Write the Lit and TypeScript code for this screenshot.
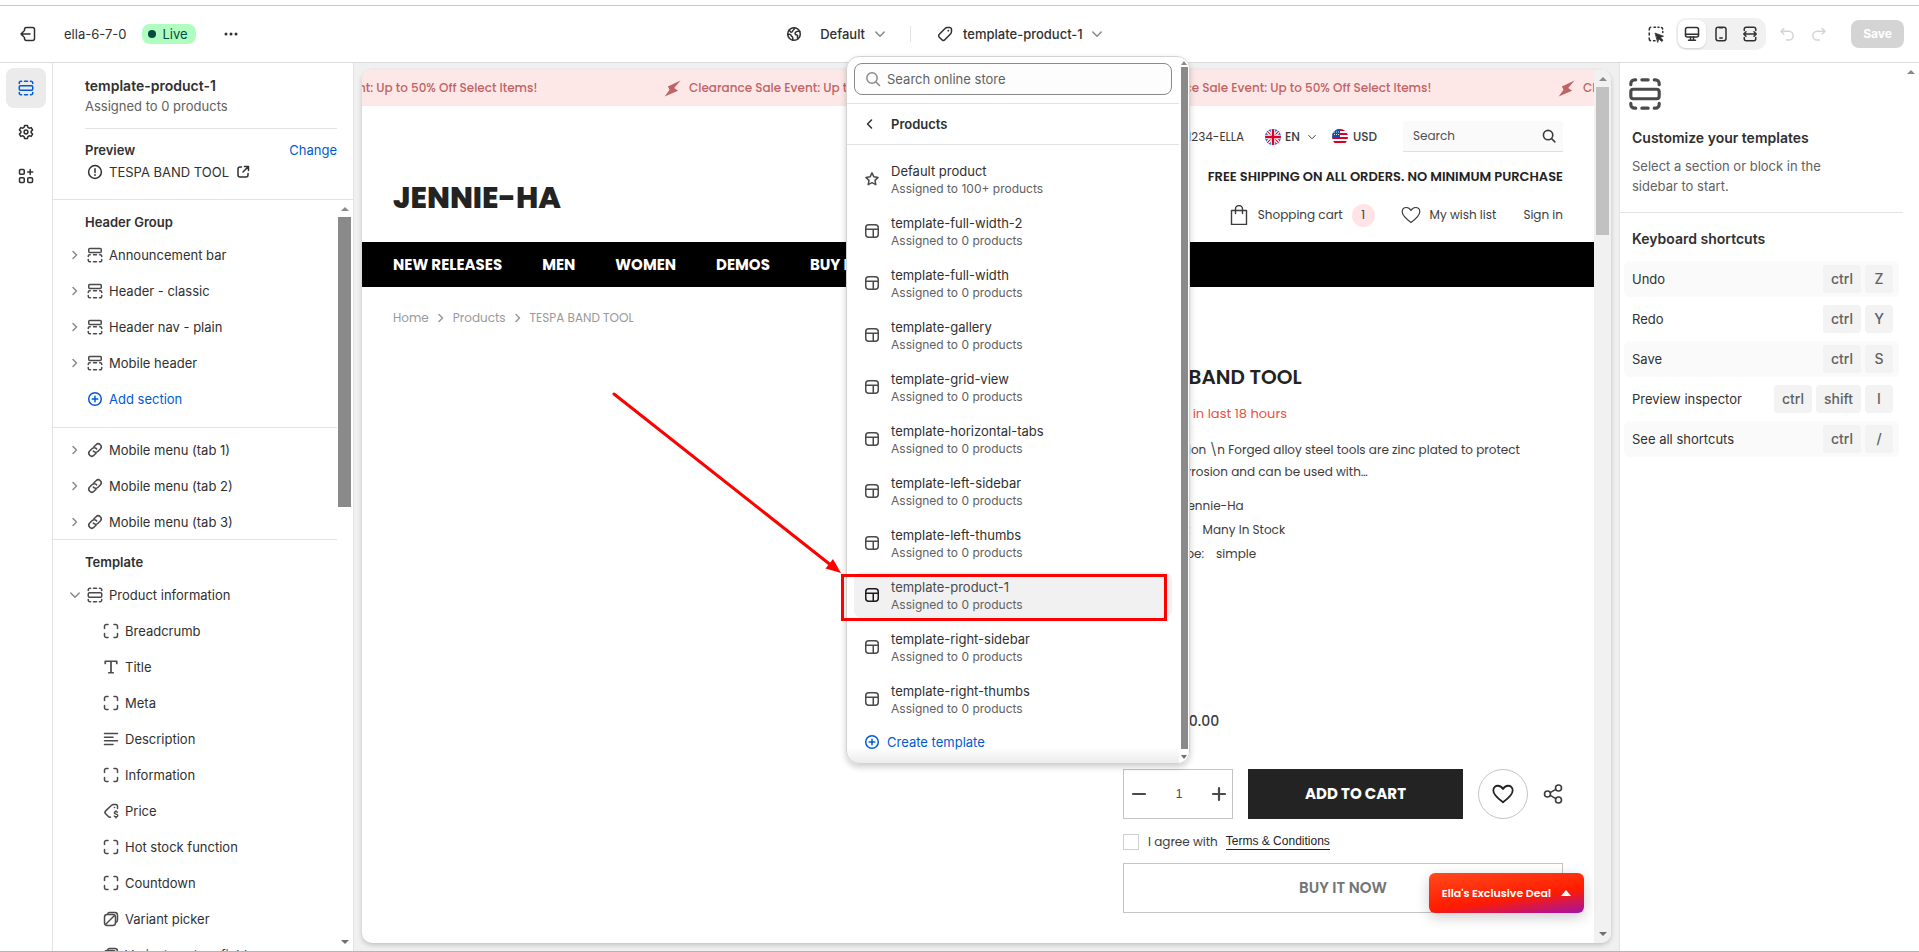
import { LitElement, html, css, svg, type TemplateResult } from "lit";
import { customElement, state } from "lit/decorators.js";
import { classMap } from "lit/directives/class-map.js";

/* ---------- icon set, drawn on a 20 unit grid ---------- */
const ICONS: Record<string, TemplateResult> = {
  exit: svg`<path d="M6.5 6.5V5.5a2 2 0 0 1 2-2h6a2 2 0 0 1 2 2v9a2 2 0 0 1-2 2h-6a2 2 0 0 1-2-2v-1M12 10H3M5.75 7.25 3 10l2.75 2.75"/>`,
  dots: svg`<g fill="currentColor" stroke="none"><circle cx="5" cy="10" r="1.5"/><circle cx="10" cy="10" r="1.5"/><circle cx="15" cy="10" r="1.5"/></g>`,
  globe: svg`<circle cx="10" cy="10" r="6.3"/><path d="M5 6.2c1.3.6 1.2 2 2.4 2.1 1.400 0 .8-1.500 2-2.200 1-.6 1-1.600.7-2.300M3.800 10.500c1.800-.4 3.200.1 3.500 1.200.3 1 1.500 1 1.500 2.200v2.300M15.800 7.500c-1.500-.5-3.600-.2-4.400 1-.9 1.400.2 2.400 1.400 2.500 1.200.2.8 1.300.6 2.200-.1.8.3 1.200.8 1.300"/>`,
  chevDown: svg`<path d="m5.800 8 4.200 4.300L14.200 8"/>`,
  chevRight: svg`<path d="m8 6.500 3.500 3.500L8 13.500"/>`,
  chevLeft: svg`<path d="M11.500 6 7.500 10l4 4"/>`,
  tag: svg`<path d="M10.300 4.300c.6-.6 1.300-.8 2.100-.8h2.100a2 2 0 0 1 2 2v2.100c0 .8-.3 1.500-.8 2.100l-5.900 6.100a2 2 0 0 1-2.900 0l-2.600-2.600a2 2 0 0 1 0-2.900z"/><circle cx="13.300" cy="6.700" r=".9" fill="currentColor" stroke="none"/>`,
  inspector: svg`<path d="M3.250 6v-.75a2 2 0 0 1 1.500-2M8 3.250h1.500M12 3.250h1M15.500 3.500a2 2 0 0 1 1.200 1.500M16.750 7.500v1M3.250 9v2M3.250 14v.75a2 2 0 0 0 1.250 2M7.500 16.750h1.500"/><path d="m9.300 9.200 8.200 3-3.200 1.200 2.700 2.900-1.300 1.300-2.800-2.800-1.100 3.300z" fill="currentColor" stroke-width=".8"/>`,
  desktop: svg`<rect x="3.500" y="3.500" width="13" height="9.500" rx="2"/><path d="M3.500 10.200h13M8.500 13v3M11.500 13v3M6.500 16.300h7"/>`,
  phone: svg`<rect x="5" y="3.250" width="10" height="13.500" rx="2.200"/><path d="M8.800 14h2.400M8.500 3.700h3"/>`,
  expand: svg`<path d="M4.250 6.500V5.250a2 2 0 0 1 2-2h7.500a2 2 0 0 1 2 2V6.500M4.250 13.500v1.250a2 2 0 0 0 2 2h7.500a2 2 0 0 0 2-2V13.500M4 10h12M6 7.800 3.750 10 6 12.200M14 7.800 16.250 10 14 12.200"/>`,
  undo: svg`<path d="M6.800 4.500 4 7.250 6.800 10M4.250 7.250h7.500a4.300 4.300 0 0 1 0 8.750H9.500"/>`,
  redo: svg`<path d="M13.200 4.500 16 7.250 13.200 10M15.750 7.250h-7.500a4.300 4.300 0 0 0 0 8.750h2.250"/>`,
  section: svg`<rect x="3.250" y="7.750" width="13.500" height="4.500" rx="1.200"/><path d="M3.250 5.600v-.6A1.750 1.750 0 0 1 5 3.250h.6M8.500 3.250h3M14.400 3.250h.6A1.750 1.750 0 0 1 16.750 5v.6M3.250 14.400v.6A1.750 1.750 0 0 0 5 16.750h.6M8.500 16.750h3M14.400 16.750h.6A1.750 1.750 0 0 0 16.750 15v-.6"/>`,
  header: svg`<rect x="3.750" y="3.500" width="12.500" height="4" rx="1"/><path d="M3.250 11.600V11a1.400 1.400 0 0 1 1.400-1.250h.6M8.500 9.750h3M14.700 9.750h.6A1.400 1.400 0 0 1 16.750 11v.6M3.250 14.400v.9a1.500 1.500 0 0 0 1.500 1.450h.7M8.500 16.750h3M14.500 16.750h.7a1.500 1.500 0 0 0 1.550-1.450v-.9"/>`,
  gear: svg`<path d="M8.600 3.400h2.800l.5 2 1.300.8 2-.6 1.400 2.400-1.500 1.400v1.200l1.500 1.400-1.400 2.400-2-.6-1.300.8-.5 2H8.600l-.5-2-1.300-.8-2 .6-1.400-2.400 1.500-1.400V9.400L3.400 8l1.400-2.400 2 .6 1.300-.8z"/><circle cx="10" cy="10" r="1.900"/>`,
  apps: svg`<rect x="3.500" y="3.500" width="4.750" height="4.750" rx="1"/><rect x="3.500" y="11.750" width="4.750" height="4.750" rx="1"/><rect x="11.750" y="11.750" width="4.750" height="4.750" rx="1"/><path d="M14.200 3.500v5M11.700 6h5"/>`,
  alert: svg`<circle cx="10" cy="10" r="6.400"/><path d="M10 6.800v3.700"/><circle cx="10" cy="13" r=".9" fill="currentColor" stroke="none"/>`,
  external: svg`<path d="M8.500 5H7A2 2 0 0 0 5 7v6a2 2 0 0 0 2 2h6a2 2 0 0 0 2-2v-1.500M11.500 4.500h4v4M15.200 4.800 10 10"/>`,
  plus: svg`<circle cx="10" cy="10" r="6.300"/><path d="M10 7.200v5.600M7.200 10h5.600"/>`,
  link: svg`<g transform="rotate(-45 10 10)"><path d="M8.500 13H5.500a3 3 0 0 1 0-6h3.500a3 3 0 0 1 2.900 3.500M11.500 7h3a3 3 0 0 1 0 6H11a3 3 0 0 1-2.900-3.500"/></g>`,
  block: svg`<path d="M3.500 7.500V5.250A1.750 1.750 0 0 1 5.250 3.500H7M13 3.500h1.750a1.750 1.750 0 0 1 1.750 1.750V7.500M3.500 12.500v2.250A1.750 1.750 0 0 0 5.250 16.500H7M13 16.500h1.750a1.750 1.750 0 0 0 1.750-1.750V12.500"/>`,
  title: svg`<path d="M4.250 6.500V4.250h11.500V6.500M10 4.250v11.500M7.800 15.750h4.400" stroke-width="1.700"/>`,
  text: svg`<path d="M3.500 4.500h13M3.500 8.200h8.500M3.500 11.800h13M3.500 15.500h8.500"/>`,
  price: svg`<path d="M16.500 7.500V5.300a1.800 1.800 0 0 0-1.800-1.800h-2.100c-.8 0-1.500.3-2 .8l-6 5.600a2 2 0 0 0 0 2.800l2.800 2.900c.7.700 1.500.8 2.100.5"/><circle cx="13.500" cy="6.500" r=".8" fill="currentColor" stroke="none"/><path d="M16.500 11.200c-.4-.7-3.200-1-3.200.6 0 1.700 3.500.8 3.500 2.700 0 1.700-3 1.600-3.600.5M15 9.800v1M15 16v1" stroke-width="1.400"/>`,
  variant: svg`<path d="M6.500 5.200a2.200 2.200 0 0 1 1.800-1.700h5.500a2.700 2.700 0 0 1 2.700 2.700v4.800a2.200 2.200 0 0 1-1.700 2.200"/><rect x="3.500" y="5.500" width="11" height="11" rx="2.700"/><path d="m5 15 8-8"/>`,
  layout: svg`<rect x="3.750" y="3.750" width="12.500" height="12.500" rx="3"/><path d="M4 8.250h12M11.250 8.250v8"/>`,
  star: svg`<path d="m10 3.900 1.900 3.900 4.200.6-3.100 3 .8 4.300-3.800-2-3.800 2 .8-4.300-3.100-3 4.200-.6z"/>`,
  search: svg`<circle cx="9" cy="9" r="5.200"/><path d="m13 13 3.500 3.500"/>`,
  bolt: svg`<path d="M19.500 .5 4.500 7.500 6.500 11.500 .8 19.500 16.500 12.500 12 9.500z" fill="currentColor" stroke="none"/>`,
  flame: svg`<path d="M10 2c1 3 5 5 5 10a5 5 0 0 1-10 0c0-2 1-3 2-4 .3 1.500 1 2 1.500 2C9 7 8.500 5 10 2z" fill="currentColor" stroke="none"/>`,
  bag: svg`<path d="M2.500 5.500h15v14h-15zM6.500 8.500V4a3.500 3.500 0 0 1 7 0v4.500"/>`,
  heart: svg`<path d="M10 17.500C6 14.500 1.200 11 1.200 6.800 1.200 4 3.200 2.500 5.400 2.500 7.500 2.500 9 3.800 10 5.500c1-1.700 2.500-3 4.600-3 2.200 0 4.200 1.500 4.200 4.300 0 4.200-4.800 7.700-8.800 10.700z"/>`,
  share: svg`<circle cx="4.500" cy="10" r="3"/><circle cx="15.500" cy="4" r="3"/><circle cx="15.500" cy="16" r="3"/><path d="M7.200 8.600 12.800 5.400M7.200 11.400l5.600 3.200"/>`,
  minus: svg`<path d="M4 10h12"/>`,
  cross: svg`<path d="M4 10h12M10 4v12"/>`,
};

const icon = (name: string, size = 20, stroke = 1.5) => html`<svg
  class="icon" width=${size} height=${size} viewBox="0 0 20 20" fill="none" stroke="currentColor"
  stroke-width=${stroke} stroke-linecap="round" stroke-linejoin="round" aria-hidden="true">${ICONS[name]}</svg>`;

const ukFlag = html`<svg width="16" height="16" viewBox="0 0 16 16" aria-hidden="true">
  <defs><clipPath id="uk"><circle cx="8" cy="8" r="8" /></clipPath></defs>
  <g clip-path="url(#uk)"><rect width="16" height="16" fill="#0b50b3" />
    <path d="M0 0l16 16M16 0 0 16" stroke="#fff" stroke-width="3.600" /><path d="M0 0l16 16M16 0 0 16" stroke="#d80027" stroke-width="1.200" />
    <path d="M8 0v16M0 8h16" stroke="#fff" stroke-width="4.600" /><path d="M8 0v16M0 8h16" stroke="#d80027" stroke-width="2.400" /></g></svg>`;
const usFlag = html`<svg width="16" height="16" viewBox="0 0 16 16" aria-hidden="true">
  <defs><clipPath id="us"><circle cx="8" cy="8" r="8" /></clipPath></defs>
  <g clip-path="url(#us)"><rect width="16" height="16" fill="#fff" />
    <path d="M0 1h16M0 5h16M0 9h16M0 13h16" stroke="#d80027" stroke-width="2" />
    <rect width="8" height="8" fill="#0b50b3" /><path d="M2 3h5M2 5.500h5" stroke="#fff" stroke-width=".8" stroke-dasharray="1 1" /></g></svg>`;

const HEADER_ROWS = ["Announcement bar", "Header - classic", "Header nav - plain", "Mobile header"];
const MENU_ROWS = ["Mobile menu (tab 1)", "Mobile menu (tab 2)", "Mobile menu (tab 3)"];
const BLOCKS: [string, string][] = [
  ["block", "Breadcrumb"], ["title", "Title"], ["block", "Meta"], ["text", "Description"],
  ["block", "Information"], ["price", "Price"], ["block", "Hot stock function"],
  ["block", "Countdown"], ["variant", "Variant picker"], ["variant", "Variant custom field"],
];
const TEMPLATES = [
  "Default product", "template-full-width-2", "template-full-width", "template-gallery",
  "template-grid-view", "template-horizontal-tabs", "template-left-sidebar", "template-left-thumbs",
  "template-product-1", "template-right-sidebar", "template-right-thumbs",
];
const SHORTCUTS: [string, string[]][] = [
  ["Undo", ["ctrl", "Z"]], ["Redo", ["ctrl", "Y"]], ["Save", ["ctrl", "S"]],
  ["Preview inspector", ["ctrl", "shift", "I"]], ["See all shortcuts", ["ctrl", "/"]],
];

@customElement("app-root")
export class AppRoot extends LitElement {
  @state() private selected = "template-product-1";

  static styles = css`
    :host {
      display: grid;
      grid-template-rows: auto minmax(0, 1fr);
      height: 100vh;
      box-sizing: border-box;
      border-bottom: 1px solid #b9b2b6;
      padding-top: 5px;
      overflow: hidden;
      position: relative;
      background: #fff;
      color: #303030;
      font: 400 13px/20px Inter, sans-serif;
    }
    *, *::before, *::after { box-sizing: border-box; }
    button, input { font: inherit; color: inherit; margin: 0; }
    button { background: none; border: 0; padding: 0; text-align: left; display: flex; align-items: center; cursor: pointer; }
    a { color: inherit; text-decoration: none; }
    h1, h2, h3, p, ul { margin: 0; padding: 0; list-style: none; font-size: inherit; }
    .icon { display: block; flex: none; }
    .strong { font-weight: 600; }
    .blue { color: #005bd3; }
    .muted { color: #616161; }

    /* top bar */
    .topbar {
      display: grid; grid-template-columns: 1fr auto 1fr; align-items: center;
      height: 58px; border-top: 1px solid #c9c9c9; border-bottom: 1px solid #dcdcdc;
      padding: 0 15px 0 18px; position: relative; z-index: 2;
    }
    .tb-left, .tb-mid, .tb-right { display: flex; align-items: center; }
    .theme-name { margin-left: 26px; }
    .badge { display: flex; align-items: center; gap: 6px; height: 20px; padding: 0 8px 0 6px; margin: 0 25px 0 16px; border-radius: 8px; background: #affebf; color: #014b40; }
    .dot { width: 8px; height: 8px; border-radius: 50%; background: #014b40; }
    .tb-mid { font-weight: 500; padding-right: 31px; }
    .label { margin: 0 5px 0 16px; }
    .picker .label { margin: 0 4px 0 8px; }
    .label + .icon { color: #8a8a8a; }
    .sep { width: 1px; height: 16px; margin: 0 18px 0 20px; background: #e3e3e3; }
    .picker { position: relative; padding-left: 6px; }
    .tb-right { justify-content: flex-end; }
    .devices { display: flex; gap: 1px; padding: 2px; margin: 0 11px 0 10px; border-radius: 10px; background: #f1f1f1; }
    .devices button { width: 28px; height: 28px; justify-content: center; border-radius: 8px; }
    .devices .on { background: #fff; box-shadow: 0 1px 2px #0002; }
    .history { display: flex; gap: 12px; color: #d4d4d4; margin-right: 22px; }
    .save { height: 28px; padding: 0 12px; border-radius: 8px; background: #d4d4d4; color: #fff; font-weight: 700; font-size: 12px; }

    /* body */
    .body { display: grid; grid-template-columns: 53px 301px minmax(0, 1fr) 300px; min-height: 0; }
    .rail { display: flex; flex-direction: column; gap: 4px; padding: 5px 6px; border-right: 1px solid #e3e3e3; }
    .rail button { height: 40px; justify-content: center; border-radius: 8px; }
    .rail .on { background: #ebebeb; color: #005bd3; }

    .panel { display: flex; flex-direction: column; min-height: 0; border-right: 1px solid #e3e3e3; }
    .p-head { padding: 13px 16px 17px 32px; border-bottom: 1px solid #e3e3e3; }
    .p-title { font-size: 14px; }
    .preview { border-top: 1px solid #e3e3e3; margin-top: 12px; padding-top: 11px; display: grid; gap: 2px; }
    .line { display: flex; justify-content: space-between; }
    .res { display: flex; align-items: center; gap: 4px; }
    .tree { display: grid; grid-template-columns: minmax(0, 1fr) 16px; flex: 1; min-height: 0; overflow: hidden; }
    .sections { min-width: 0; min-height: 0; overflow: hidden; }
    .group { border-bottom: 1px solid #e3e3e3; padding-bottom: 10px; }
    .group.tabs { padding: 4px 0 0; }
    .group.tabs .row:last-child { height: 35px; }
    .g-title { padding: 12px 32px 5px; }
    .group.last { border: 0; }
    .row { height: 36px; width: 100%; padding-left: 12px; }
    .row .chev { color: #8a8a8a; }
    .row > .icon { color: #4a4a4a; }
    .row .name { margin-left: 4px; }
    .row.child { padding-left: 48px; }
    .row.add { padding-left: 32px; }
    .row.add > .icon { color: #005bd3; }
    .bar { display: flex; flex-direction: column; align-items: center; min-height: 0; padding-top: 7px; }
    .tree .bar { padding-right: 1px; }
    .up, .down { flex: none; border: 4px solid transparent; width: 0; height: 0; }
    .up { border-top: 0; border-bottom-color: #8a8a8a; }
    .down { border-bottom: 0; border-top-color: #6f6f6f; margin-top: auto; margin-bottom: 7px; }
    .thumb { flex: none; background: #8a8a8a; width: 13px; }
    .tree .thumb { height: 290px; margin: 6px 0; }

    /* preview canvas */
    .canvas { background: #f0f0f0; padding: 7px 8px; min-width: 0; min-height: 0; }
    .frame { height: calc(100% - 1px); display: grid; grid-template-columns: minmax(0, 1fr) 17px; background: #fff; border-radius: 10px; overflow: hidden; box-shadow: 0 2px 5px #0003; position: relative; }
    .frame .bar { background: #f1f1f1; }
    .frame .thumb { background: #c1c1c1; height: 148px; margin-top: 6px; }
    .store { min-width: 0; overflow: hidden; color: #3c3c3c; font-family: Poppins, Inter, sans-serif; font-size: 12px; line-height: 22px; }
    .ticker { height: 36px; overflow: hidden; background: #fee8e7; color: #bf6466; }
    .track { display: flex; margin-left: -145px; height: 100%; }
    .promo { flex: none; width: 447px; display: flex; align-items: center; gap: 8px; font-weight: 500; white-space: nowrap; }
    .s-head { display: flex; justify-content: space-between; padding: 15px 31px 15px; }
    .logo { font-size: 30px; line-height: 36px; font-weight: 800; color: #232323; padding-top: 59px; }
    .s-tools { display: flex; flex-direction: column; align-items: flex-end; }
    .s-line { display: flex; align-items: center; }
    .lang { font-weight: 500; gap: 5px; }
    .lang.en { gap: 4px; margin: 0 12px 0 21px; }
    .s-search { display: flex; align-items: center; width: 160px; height: 31px; margin-left: 26px; padding: 0 5px 0 10px; background: #fafafa; border-bottom: 1px solid #e0e0e0; }
    .s-search input { flex: 1; min-width: 0; border: 0; background: none; outline: 0; padding: 0; }
    .s-search input::placeholder { color: #505050; opacity: 1; }
    .free { font-weight: 600; font-size: 13px; line-height: 20px; color: #232323; margin: 15px 0 16px; }
    .s-user { gap: 9px; height: 24px; }
    .count { width: 23px; height: 23px; border-radius: 50%; background: #ffe3e6; text-align: center; margin-right: 17px; }
    .signin { margin-left: 18px; }
    .s-nav { display: flex; gap: 40px; height: 45px; align-items: center; padding: 0 31px; background: #000; color: #fff; font-size: 15px; font-weight: 700; white-space: nowrap; overflow: hidden; }
    .crumbs { display: flex; align-items: center; gap: 2px; padding: 20px 31px 0; color: #999; }
    .product { display: grid; grid-template-columns: minmax(0, 1fr) 440px; padding: 35px 31px 0; }
    .info { grid-column: 2; display: flex; flex-direction: column; }
    .info h1 { font-size: 20px; line-height: 26px; font-weight: 600; color: #232323; }
    .sold { display: flex; align-items: center; gap: 6px; font-size: 13px; color: #e95144; margin-top: 13px; }
    .desc { margin: 14px 0 11px; padding-right: 20px; }
    .meta { display: flex; gap: 12px; line-height: 24px; }
    .price { font-weight: 500; font-size: 14px; margin: 144px 0 37px; }
    .buy { display: flex; align-items: center; gap: 15px; }
    .qty { display: flex; align-items: center; width: 110px; height: 50px; padding: 0 3px 0 5px; border: 1px solid #c4c4c4; color: #4a4a4a; }
    .qty input { flex: 1; min-width: 0; width: 0; border: 0; outline: 0; text-align: center; padding: 0; font: 12px "Liberation Sans", sans-serif; }
    .cart { flex: 1; height: 50px; justify-content: center; background: #232323; color: #fff; font-weight: 700; font-size: 15px; }
    .wish { width: 50px; height: 50px; border: 1px solid #c4c4c4; border-radius: 50%; justify-content: center; color: #232323; }
    .terms { display: flex; align-items: center; margin: 12px 0 10px; height: 22px; }
    .terms input { appearance: none; width: 16px; height: 16px; border: 1px solid #d0d0d0; margin-right: 9px; }
    .terms a { font: 12px/15px "Liberation Sans", sans-serif; border-bottom: 1px solid #232323; color: #232323; margin-left: 8px; }
    .now { height: 50px; justify-content: center; border: 1px solid #c4c4c4; color: #757575; font-weight: 600; font-size: 15px; }
    .deal { position: absolute; right: 27px; bottom: 30px; height: 40px; padding: 0 13px; gap: 10px; border-radius: 6px; color: #fff; font: 600 11px/20px Poppins, Inter, sans-serif; background: linear-gradient(172deg, #ff4a1c 0%, #ff1c00 60%, #a312a8 100%); box-shadow: 0 4px 14px #0003; }

    /* right panel */
    .help { display: grid; grid-template-columns: minmax(0, 1fr) 16px; border-left: 1px solid #e3e3e3; }
    .intro { padding: 10px 12px 16px 4px; border-bottom: 1px solid #e3e3e3; display: grid; gap: 8px; color: #4a4a4a; }
    .intro .icon { margin-bottom: 5px; }
    .intro h2, .intro p { padding-left: 8px; }
    .intro h2, .keys h2 { font-size: 14px; font-weight: 600; color: #303030; }
    .intro p { max-width: 230px; }
    .keys { padding: 16px 4px; }
    .keys h2 { padding: 0 8px; margin-bottom: 12px; }
    .keys li { display: flex; align-items: center; gap: 4px; height: 36px; margin-bottom: 4px; padding: 0 6px 0 8px; border-radius: 6px; }
    .keys li:nth-child(odd) { background: #fafafa; }
    .keys li > span { flex: 1; }
    kbd { min-width: 28px; height: 28px; padding: 0 8px; border-radius: 4px; background: #f3f3f3; color: #616161; font: 500 14px/28px Inter, sans-serif; text-align: center; }

    /* template menu */
    .menu { position: absolute; left: -83px; top: 32px; width: 344px; height: 708px; display: grid; grid-template-columns: minmax(0, 1fr) 10px; background: linear-gradient(#fff 0, #fff calc(100% - 16px), #ececec 100%); border: 1px solid #d2d2d2; border-radius: 13px; overflow: hidden; box-shadow: 0 3px 6px #0003; font-weight: 400; }
    .menu .bar { padding-top: 4px; background: #fff; }
    .menu .up, .menu .down { border-left-width: 3px; border-right-width: 3px; }
    .menu .down { margin: 0 0 4px; }
    .menu .thumb { width: 7px; flex: 1; margin: 2px 0 6px; }
    .find { padding: 6px 7px 8px; border-bottom: 1px solid #e3e3e3; }
    .field { display: flex; align-items: center; gap: 4px; width: 318px; height: 32px; padding: 0 8px; border: 1px solid #8a8a8a; border-radius: 8px; background: #fdfdfd; color: #8a8a8a; }
    .field input { flex: 1; min-width: 0; border: 0; outline: 0; background: none; padding: 0; }
    .field input::placeholder { color: #616161; opacity: 1; }
    .back { width: 100%; height: 41px; padding-left: 13px; gap: 11px; border-bottom: 1px solid #e3e3e3; font-weight: 600; }
    .options { display: grid; gap: 6px; padding: 11px 7px 0; }
    .option { width: 318px; height: 46px; padding: 0 8px; gap: 9px; border-radius: 8px; }
    .option > span { display: grid; }
    .option .icon { color: #4a4a4a; }
    .option small { font-size: 12px; line-height: 16px; color: #616161; }
    .option.on { background: #f1f1f1; color: #4a4a4a; }
    .option.on .icon { color: #1a1a1a; }
    .create { padding: 10px 15px; gap: 5px; }

    /* callout drawn over the editor */
    .callout { position: absolute; z-index: 3; left: 841px; top: 574px; width: 326px; height: 47px; border: 3px solid #f00; }
    .arrow { position: absolute; z-index: 3; left: 608px; top: 388px; }
  `;

  private row(ic: string, name: string) {
    return html`<button class="row"><span class="chev">${icon("chevRight")}</span>${icon(ic)}<span class="name">${name}</span></button>`;
  }

  private menu() {
    return html`<div class="menu">
      <div>
        <div class="find"><label class="field">${icon("search")}
          <input type="text" aria-label="Search online store" placeholder="Search online store" /></label></div>
        <button class="back">${icon("chevLeft")}Products</button>
        <div class="options">${TEMPLATES.map((t, i) => html`
          <button class=${classMap({ option: true, on: t === this.selected })} @click=${() => (this.selected = t)}>
            ${icon(i ? "layout" : "star")}<span>${t}<small>Assigned to ${i ? "0" : "100+"} products</small></span>
          </button>`)}</div>
        <button class="create blue">${icon("plus")}Create template</button>
      </div>
      <div class="bar"><i class="up"></i><i class="thumb"></i><i class="down"></i></div>
    </div>`;
  }

  private topbar() {
    return html`<header class="topbar">
      <div class="tb-left">
        <button aria-label="Exit">${icon("exit")}</button>
        <span class="theme-name">ella-6-7-0</span>
        <span class="badge"><i class="dot"></i>Live</span>
        <button aria-label="More actions">${icon("dots")}</button>
      </div>
      <div class="tb-mid">
        <button>${icon("globe")}<span class="label">Default</span>${icon("chevDown")}</button>
        <i class="sep"></i>
        <div class="picker">
          <button>${icon("tag")}<span class="label">template-product-1</span>${icon("chevDown")}</button>
          ${this.menu()}
        </div>
      </div>
      <div class="tb-right">
        <button aria-label="Inspector">${icon("inspector")}</button>
        <div class="devices">
          <button class="on" aria-label="Desktop">${icon("desktop")}</button>
          <button aria-label="Mobile">${icon("phone")}</button>
          <button aria-label="Full width">${icon("expand")}</button>
        </div>
        <div class="history"><button aria-label="Undo">${icon("undo")}</button><button aria-label="Redo">${icon("redo")}</button></div>
        <button class="save">Save</button>
      </div>
    </header>`;
  }

  private panel() {
    return html`<aside class="panel">
      <div class="p-head">
        <h2 class="p-title strong">template-product-1</h2>
        <p class="muted">Assigned to 0 products</p>
        <div class="preview">
          <div class="line"><span class="strong">Preview</span><a class="blue" href="#">Change</a></div>
          <div class="res">${icon("alert")}<span>TESPA BAND TOOL</span>${icon("external")}</div>
        </div>
      </div>
      <div class="tree">
        <div class="sections">
          <div class="group"><h3 class="g-title strong">Header Group</h3>
            ${HEADER_ROWS.map((r) => this.row("header", r))}
            <button class="row add blue">${icon("plus")}<span class="name">Add section</span></button></div>
          <div class="group tabs">${MENU_ROWS.map((r) => this.row("link", r))}</div>
          <div class="group last"><h3 class="g-title strong">Template</h3>
            <button class="row"><span class="chev">${icon("chevDown")}</span>${icon("section")}<span class="name">Product information</span></button>
            ${BLOCKS.map(([ic, n]) => html`<button class="row child">${icon(ic)}<span class="name">${n}</span></button>`)}</div>
        </div>
        <div class="bar"><i class="up"></i><i class="thumb"></i><i class="down"></i></div>
      </div>
    </aside>`;
  }

  private store() {
    return html`<div class="frame">
      <div class="store">
        <div class="ticker"><div class="track">${[1, 2, 3, 4].map(() => html`
          <div class="promo">${icon("bolt", 17)}<span>Clearance Sale Event: Up to 50% Off Select Items!</span></div>`)}</div></div>
        <div class="s-head">
          <a class="logo" href="#">JENNIE-HA</a>
          <div class="s-tools">
            <div class="s-line"><span>(800) 1234-ELLA</span>
              <button class="lang en">${ukFlag}EN ${icon("chevDown", 16, 1.2)}</button>
              <button class="lang">${usFlag}USD</button>
              <label class="s-search"><input type="text" aria-label="Search" placeholder="Search" />${icon("search", 18, 1.8)}</label></div>
            <p class="free">FREE SHIPPING ON ALL ORDERS. NO MINIMUM PURCHASE</p>
            <div class="s-line s-user">${icon("bag", 20, 1.4)}<a href="#">Shopping cart</a><span class="count">1</span>
              ${icon("heart", 20, 1.2)}<a href="#">My wish list</a><a class="signin" href="#">Sign in</a></div>
          </div>
        </div>
        <nav class="s-nav">${["NEW RELEASES", "MEN", "WOMEN", "DEMOS", "BUY ELLA"].map((n) => html`<a href="#">${n}</a>`)}</nav>
        <div class="crumbs"><a href="#">Home</a>${icon("chevRight")}<a href="#">Products</a>${icon("chevRight")}<span>TESPA BAND TOOL</span></div>
        <div class="product"><div class="info">
          <h1>TESPA BAND TOOL</h1>
          <p class="sold">${icon("flame", 18)}12 sold in last 18 hours</p>
          <p class="desc">\\nDescription \\n Forged alloy steel tools are zinc plated to protect against corrosion and can be used with…</p>
          <p class="meta"><span>Vendor:</span><span>Jennie-Ha</span></p>
          <p class="meta"><span>Availability:</span><span>Many In Stock</span></p>
          <p class="meta"><span>Product Type:</span><span>simple</span></p>
          <p class="price">From $200.00</p>
          <div class="buy">
            <div class="qty"><button aria-label="Decrease">${icon("minus", 20, 2.2)}</button><input type="text" aria-label="Quantity" .value=${"1"} /><button aria-label="Increase">${icon("cross", 20, 2.2)}</button></div>
            <button class="cart">ADD TO CART</button>
            <button class="wish" aria-label="Wish list">${icon("heart", 22, 1.6)}</button>
            <button aria-label="Share">${icon("share", 20, 1.6)}</button>
          </div>
          <div class="terms"><input id="agree" type="checkbox" /><label for="agree">I agree with</label><a href="#">Terms &amp; Conditions</a></div>
          <button class="now">BUY IT NOW</button>
        </div></div>
      </div>
      <div class="bar"><i class="up"></i><i class="thumb"></i><i class="down"></i></div>
      <button class="deal">Ella's Exclusive Deal <svg width="10" height="6" viewBox="0 0 10 6" aria-hidden="true"><path d="M5 0l5 6H0z" fill="#fff" /></svg></button>
    </div>`;
  }

  private help() {
    return html`<aside class="help">
      <div>
        <div class="intro">${icon("section", 42)}<h2>Customize your templates</h2>
          <p class="muted">Select a section or block in the sidebar to start.</p></div>
        <div class="keys"><h2>Keyboard shortcuts</h2>
          <ul>${SHORTCUTS.map(([n, k]) => html`<li><span>${n}</span>${k.map((c) => html`<kbd>${c}</kbd>`)}</li>`)}</ul></div>
      </div>
      <div class="bar"><i class="up"></i></div>
    </aside>`;
  }

  render() {
    return html`${this.topbar()}
      <div class="body">
        <nav class="rail">
          <button class="on" aria-label="Sections">${icon("section")}</button>
          <button aria-label="Settings">${icon("gear")}</button>
          <button aria-label="Apps">${icon("apps")}</button>
        </nav>
        ${this.panel()}
        <main class="canvas">${this.store()}</main>
        ${this.help()}
      </div>
      <div class="callout"></div>
      <svg class="arrow" width="240" height="192" viewBox="0 0 240 192" aria-hidden="true">
        <path d="M6 6 224 178" stroke="#f00" stroke-width="3" stroke-linecap="round" /><path d="M233 185 217.500 180.500 225 171z" fill="#f00" /></svg>`;
  }
}
